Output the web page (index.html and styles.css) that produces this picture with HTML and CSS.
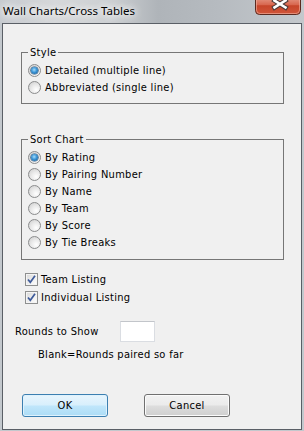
FILE: index.html
```html
<!DOCTYPE html>
<html>
<head>
<meta charset="utf-8">
<link rel="stylesheet" href="styles.css">
</head>
<body>
<div class="window">
  <div class="titlebar">
    <span class="title">Wall Charts/Cross Tables</span>
    <span class="close">
      <svg width="46" height="20" viewBox="0 0 46 20">
        <defs>
          <linearGradient id="cg" x1="0" y1="0" x2="0" y2="1">
            <stop offset="0" stop-color="#e9a898"/>
            <stop offset="0.5" stop-color="#d8674f"/>
            <stop offset="0.55" stop-color="#c7452a"/>
            <stop offset="1" stop-color="#d0563a"/>
          </linearGradient>
        </defs>
        <path d="M0.5 0 V15.5 Q0.5 19.5 4.5 19.5 H41.5 Q45.5 19.5 45.5 15.5 V0" fill="url(#cg)" stroke="#5b2a20"/>
        <path d="M1.5 0 V15 Q1.5 18.5 5 18.5 H41 Q44.5 18.5 44.5 15 V0" fill="none" stroke="#f1b4a4" stroke-opacity="0.6"/>
        <path d="M19.5 5.5 L30.5 12.5 M30.5 5.5 L19.5 12.5" stroke="#4a3a38" stroke-width="4.6" stroke-linecap="square"/>
        <path d="M19.5 5.5 L30.5 12.5 M30.5 5.5 L19.5 12.5" stroke="#ffffff" stroke-width="2.6" stroke-linecap="square"/>
      </svg>
    </span>
  </div>
  <div class="client">
    <fieldset class="group group-style">
      <legend>Style</legend>
      <div class="opt"><span class="radio on"></span>Detailed (multiple line)</div>
      <div class="opt"><span class="radio"></span>Abbreviated (single line)</div>
    </fieldset>
    <fieldset class="group group-sort">
      <legend>Sort Chart</legend>
      <div class="opt"><span class="radio on"></span>By Rating</div>
      <div class="opt"><span class="radio"></span>By Pairing Number</div>
      <div class="opt"><span class="radio"></span>By Name</div>
      <div class="opt"><span class="radio"></span>By Team</div>
      <div class="opt"><span class="radio"></span>By Score</div>
      <div class="opt"><span class="radio"></span>By Tie Breaks</div>
    </fieldset>
    <div class="checks">
      <div class="chk"><span class="box"><svg width="11" height="11" viewBox="0 0 11 11"><path d="M2 5.5 L4.3 8.3 L9 1.8" fill="none" stroke="#3d5a9a" stroke-width="1.7"/></svg></span>Team Listing</div>
      <div class="chk"><span class="box"><svg width="11" height="11" viewBox="0 0 11 11"><path d="M2 5.5 L4.3 8.3 L9 1.8" fill="none" stroke="#3d5a9a" stroke-width="1.7"/></svg></span>Individual Listing</div>
    </div>
    <div class="rounds"><span class="rlabel">Rounds to Show</span><span class="input"></span></div>
    <div class="hint">Blank=Rounds paired so far</div>
    <div class="buttons">
      <span class="btn default">OK</span>
      <span class="btn cancel">Cancel</span>
    </div>
  </div>
</div>
</body>
</html>
```
FILE: styles.css
```css
html, body {
  margin: 0;
  padding: 0;
}
body {
  width: 304px;
  height: 431px;
  overflow: hidden;
  background: #c3c8cd;
  font-family: "DejaVu Sans Condensed", Tahoma, sans-serif;
  font-size: 11px;
  letter-spacing: 0.3px;
  color: #000;
}
.window {
  display: flex;
  flex-direction: column;
  height: 431px;
}
.titlebar {
  height: 23px;
  display: flex;
  align-items: flex-start;
  overflow: hidden;
  background: linear-gradient(90deg, #c6cacf 0%, #d6d8da 18%, #cdd0d3 36%, #afb4b9 52%, #b6bbc0 72%, #c4c8cc 100%);
}
.title {
  font-family: "Noto Sans", "Open Sans", sans-serif;
  font-size: 11.5px;
  letter-spacing: 0;
  line-height: 16px;
  margin-top: 3px;
  padding-left: 3px;
  color: #000;
  text-shadow: 0 0 6px #fff, 0 0 10px #fff, 0 0 14px #fff;
}
.close {
  margin-left: auto;
  margin-right: 3px;
  margin-top: -5px;
  width: 46px;
  height: 20px;
  display: block;
}
.close svg { display: block; }
.client {
  margin: 0 2px;
  height: 407px;
  box-sizing: border-box;
  border: 1px solid #5a5f66;
  background: #f0f0f0;
  display: flex;
  flex-direction: column;
  align-items: flex-start;
}
.group {
  margin: 0 0 0 18px;
  width: 263px;
  box-sizing: border-box;
  border: 1px solid #767676;
  padding: 3px 0 7px 6px;
  min-width: 0;
}
.group legend {
  padding: 0 2px;
  line-height: 13px;
  font-size: 11px;
}
.group-style { margin-top: 22px; }
.group-sort { margin-top: 29px; padding-bottom: 8px; }
.opt {
  display: flex;
  align-items: center;
  height: 17px;
  gap: 4px;
  white-space: nowrap;
}
.radio {
  width: 13px;
  height: 13px;
  flex: none;
  box-sizing: border-box;
  border-radius: 50%;
  border: 1px solid #8b8c8d;
  background: radial-gradient(circle at 65% 70%, #ffffff 0%, #eaeaea 45%, #cbcbcb 100%);
  display: flex;
  align-items: center;
  justify-content: center;
}
.radio.on::after {
  content: "";
  width: 7px;
  height: 7px;
  border-radius: 50%;
  background: radial-gradient(circle at 45% 40%, #a6ddfb 0%, #3a94d6 45%, #0f4f86 100%);
  box-shadow: 0 0 0 0.6px #244e74;
}
.checks {
  margin: 10px 0 0 22px;
  display: flex;
  flex-direction: column;
}
.chk {
  display: flex;
  align-items: center;
  height: 18px;
  gap: 3px;
  white-space: nowrap;
}
.box {
  width: 13px;
  height: 13px;
  box-sizing: border-box;
  border: 1px solid #8e8f8f;
  background: linear-gradient(135deg, #d8d8d8 0%, #f0f0f0 60%, #ffffff 100%);
  box-shadow: inset 0 0 0 1px #f4f4f4;
  display: flex;
  align-items: center;
  justify-content: center;
  flex: none;
}
.box svg { display: block; }
.rounds {
  margin: 15px 0 0 12px;
  display: flex;
  align-items: center;
  height: 21px;
}
.rlabel {
  width: 105px;
  white-space: nowrap;
}
.input {
  width: 35px;
  height: 21px;
  box-sizing: border-box;
  border: 1px solid #dadde2;
  border-top-color: #c2c5ca;
  background: #fff;
}
.hint {
  margin-top: 6px;
  padding-left: 35px;
  line-height: 13px;
  white-space: nowrap;
}
.buttons {
  margin: 33px 0 0 19px;
  display: flex;
  gap: 36px;
}
.btn {
  width: 86px;
  height: 23px;
  box-sizing: border-box;
  border: 1px solid #707070;
  border-radius: 3px;
  display: flex;
  align-items: center;
  justify-content: center;
  background: linear-gradient(#f2f2f2 0%, #ebebeb 48%, #dddddd 52%, #cfcfcf 100%);
  box-shadow: inset 0 0 0 1px #fbfbfb;
}
.btn.default {
  border-color: #3c7fb1;
  background: linear-gradient(#e8f5fd 0%, #d8effc 48%, #c0e6fb 52%, #acdcf6 100%);
  box-shadow: inset 0 0 0 1px #dff2fd;
}
```
